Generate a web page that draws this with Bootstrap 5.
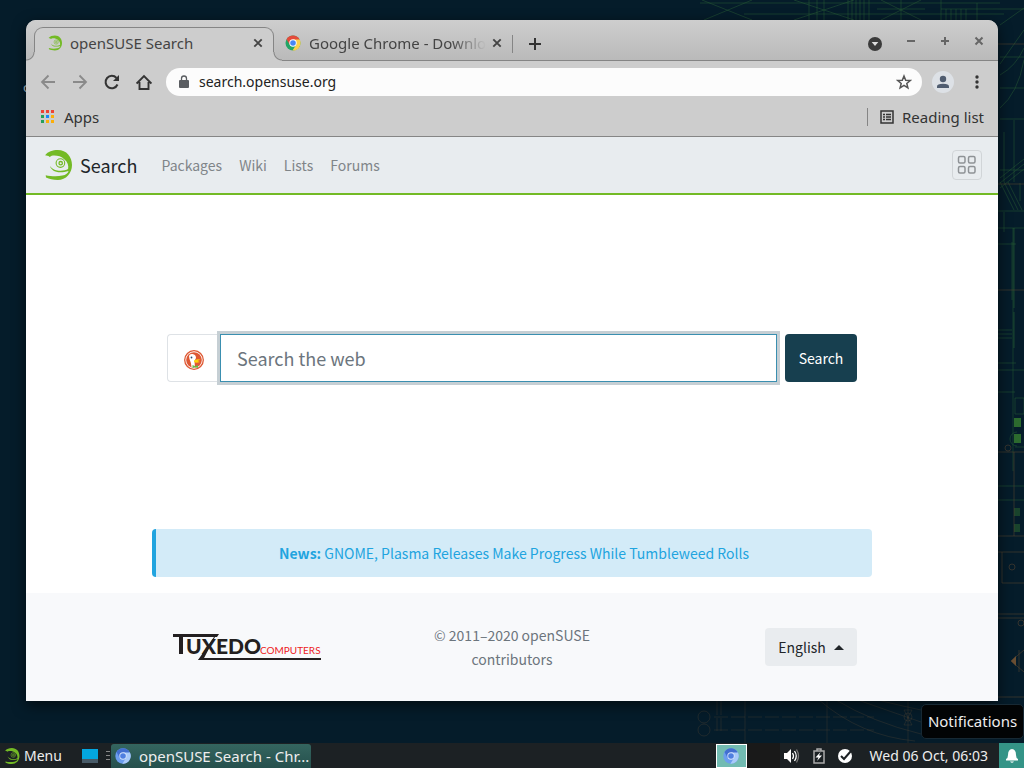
<!DOCTYPE html>
<html lang="en">
<head>
<meta charset="utf-8">
<meta name="viewport" content="width=device-width, initial-scale=1">
<title>openSUSE Search</title>
<link href="https://cdn.jsdelivr.net/npm/bootstrap@5.3.0/dist/css/bootstrap.min.css" rel="stylesheet">
<style>
:root{--ui:"Noto Sans",sans-serif;--site:"Noto Sans CJK SC",sans-serif;--green:#73ba25}
body{font:15px/20px var(--ui);background:#051c2a;color:#333}
button{font:inherit}
.bare{border:0;background:none;padding:0;color:inherit;display:inline-flex;align-items:center;justify-content:center}
svg{display:block;flex:none}
.desktop{padding:20px 26px 42px;min-height:0}
.wallpaper{z-index:0}
.browser{z-index:1;border-radius:10px 10px 0 0;box-shadow:0 4px 14px rgba(0,0,0,.6);background:#cdcdcd}
.tabstrip{height:41px;padding:7px 8px 0;background:linear-gradient(#cecece,#b9b9b9);box-shadow:inset 0 -1px #858585;border-radius:10px 10px 0 0;color:#444}
.tab-active{width:240px;padding:0 10px 3px 13px;background:#cdcdcd;border:1px solid #858585;border-bottom:0;border-radius:9px 9px 0 0}
.tab-active::before,.tab-active::after{content:"";position:absolute;bottom:0;width:9px;height:9px}
.tab-active::before{left:-9px;background:radial-gradient(circle at 0 0,transparent 7px,#858585 8px,#cdcdcd 9px)}
.tab-active::after{right:-9px;background:radial-gradient(circle at 100% 0,transparent 7px,#858585 8px,#cdcdcd 9px)}
.tab-idle{width:238px;padding:0 10px 2px 11px}
.fade-title{-webkit-mask-image:linear-gradient(90deg,#000 80%,transparent);mask-image:linear-gradient(90deg,#000 80%,transparent)}
.rule{width:1px;height:18px;background:#858585}
.controls{padding-right:6px}
.tools{height:42px;padding:0 14px;color:#333}
.address{height:28px;margin:0 10px 0 14px;background:#fcfcfc;border-radius:14px;padding:0 10px 0 11px}
.address input{border:0;background:none;outline:0;padding:0 0 1px;color:#222;font-size:14px}
.marks{height:34px;padding:0 14px 5px;border-bottom:1px solid #858585}
.marks a{color:#333;text-decoration:none}
.page{font:14px/24px var(--site);background:#fff;color:#212529;min-height:0}
.sitebar{height:58px;padding:0 16px 0 18px;background:#e8ecef;border-bottom:2px solid var(--green)}
.sitebar a{text-decoration:none;color:#808589}
.sitebar .brand{font-size:18px;line-height:22px;color:#212529}
.sitelinks{gap:17px}
.gridbtn{width:30px;height:30px;border:1px solid #d1d5d8;border-radius:4px;color:#8e9296}
.narrow{width:100%;max-width:720px}
.finder{padding:0 15px 8px}
.engine{width:53px;border:1px solid #dee2e6;border-right:0;border-radius:4px 0 0 4px;background:#fff}
.query{height:48px;border:1px solid #3a8fb0;border-radius:0;padding:0 16px;font-size:18px;color:#212529;outline:0;box-shadow:0 0 0 3px #c6cfd4!important}
.query::placeholder{color:#6c757d}
.go{width:72px;height:48px;background:#173f4f;color:#fff;border-radius:4px}
.news{height:48px;border-left:4px solid #21a4df;border-radius:4px;background:#d3ebf8;color:#21a4df}
.news a{color:inherit;text-decoration:none}
.foot{background:#f8f9fb;color:#6c757d;padding:30px 0}
.foot .narrow{padding:0 15px}
.lang{width:92px;height:38px;background:#e9ecef;color:#212529;border-radius:4px}
.panel{height:25px;background:#1c2124;color:#eee;z-index:2;font-size:14px}
.task{width:200px;height:24px;background:linear-gradient(#34655f,#26504d);border-radius:3px 3px 0 0;color:#eee;font-size:15px}
.pager{width:31px;height:24px;background:#72bbb2;border:1px solid #fff}
.pager-idle{width:33px;height:25px;background:#191919}
.tray{gap:10px;padding:0 4px 0 3px}
.clock{margin:0 11px 0 13px}
.bell{width:25px;height:25px;background:#349487}
.tip{right:0;bottom:29px;width:103px;height:35px;padding-bottom:1px;background:#020405;border:1px solid #172934;border-radius:5px;color:#eee;font-size:15px}
</style>
</head>
<body class="d-flex flex-column vh-100 overflow-hidden position-relative">
<svg width="0" height="0" class="position-absolute" aria-hidden="true"><defs>
<symbol id="geeko" viewBox="-.7 0 28 30"><path fill="#73ba25" d="M.4 5.200C3.200 1.500 8 0 13 0c9 0 14.300 6.800 14.300 15S21.500 30 13 30C8.200 30 4.600 28.800 1.300 27.600L1 25.200c5 1.300 12 1.600 16.600.4 3.600-.9 5.900-2.600 6.200-4.700-6.200 2-12.400 1.600-15.300-.5-1.900-1.400-2.700-2.600-3.300-4.400 2 2.700 4.300 3.900 7.300 4.400 4.300.6 8.500 0 10.900-1.400.7-3.500-.4-7-3.600-9.600C16.200 6 11.100 5.200 7 5.800L5 7 3.800 5.900Z"/><g fill="none" stroke="#73ba25"><circle cx="15.700" cy="13.100" r="4.300" stroke-width="1.100"/><circle cx="16" cy="13.200" r="1.700" stroke-width="1.300"/></g></symbol>
<symbol id="chrome" viewBox="0 0 16 16"><circle cx="8" cy="8" r="7.500" fill="#22a565"/><path fill="#e44b3b" d="M1.500 4.200a7.500 7.500 0 0 1 13 0L13 6H8L4.700 9.600Z"/><path fill="#fbd04d" d="M8 4.600h6.700A7.500 7.500 0 0 1 7.500 15.500l3.800-6Z"/><circle cx="8" cy="8" r="3.700" fill="#fff"/><circle cx="8" cy="8" r="2.800" fill="#4686f5"/></symbol>
<symbol id="chromium" viewBox="0 0 16 16"><circle cx="8" cy="8" r="7.700" fill="#6b9dee"/><path fill="#426ed0" d="M1.500 3.900a7.700 7.700 0 0 1 13 0L14 5H8L4.700 10Z"/><path fill="#a9cafa" d="M8 4.600h6.900A7.700 7.700 0 0 1 7.400 15.700l3.900-6.200Z"/><circle cx="8" cy="8" r="3.700" fill="#d5e3fc"/><circle cx="8" cy="8" r="2.800" fill="#4f7fe0"/></symbol>
<symbol id="cross" viewBox="0 0 10 10"><path d="m1.300 1.300 7.400 7.400m0-7.400L1.300 8.700" stroke="currentColor" stroke-width="1.900" fill="none"/></symbol>
</defs></svg>

<svg class="wallpaper position-absolute top-0 start-0 w-100 h-100" aria-hidden="true">
<text x="23" y="92" font-size="13" fill="#b9cbd5">o</text>
<svg x="100%" overflow="visible"><g fill="none" stroke="#275c36" stroke-opacity=".5">
<path d="M-324 3h300M-280 14h260M-322 0l50 20m0-20-48 20M-230 0l60 20m0-20-60 20M-215 0v20M-207 0v20M-200 0v20M-176 0v20M-172 0v20M-168 0v20M-164 0v20M-160 0v20M-155 0v20M-123 0v20M-147 9h48M-143 0l40 20m0-20-40 20M-83 9H0M-83 0v20M-78 9v11M-73 9v11M-68 9v11M-63 9v11M-58 9v11M-47 3v17"/>
<path d="M-24 75Q-8 66 0 48M-24 108Q-6 93 0 60M-24 178 0 159M-24 183 0 164M-24 188 0 169"/>
<path d="M-24 25 0 8M-24 64 0 30M-24 57h24M-24 88h24M-24 119h24M-20 132v50M-10 120v62M-24 170h24M-4 183v18"/>
<path d="m-24 182 14 28m-10-28 14 28m-10-28 14 28M-26 211H0M-26 228H0M-11 228v243M-20 212v20M-12 242v58M-26 244h18M-26 330h14m-14 4h14m-14 4h14M-26 363h18M-26 370H0M-26 392h17M-9 398H0v16H-9zM-9 447H0M-26 486H0M-26 500H0M-7 432a7 7 0 1 0 0 14"/>
</g><path d="M-10 312v36M-10 228v80" stroke="#39833a" stroke-width="2" stroke-opacity=".2"/>
<g fill="#3d8b31" opacity=".7"><path d="M-10 418h7v9h-7zM-10 434h7v9h-7z"/><path d="M-10 508h6v8h-6zM-10 524h6v8h-6z" opacity=".5"/></g>
<g fill="none" stroke="#594631" stroke-opacity=".55"><path d="M-26 44H0M-26 184H0M-26 290H0M-26 452H0M-26 536H0M-10 452v84M-26 614H0M-26 618H0M-26 552H0M-22 552v31h22M-26 697H0" /><circle cx="-16" cy="448" r="3"/><circle cx="-12" cy="567" r="3"/><circle cx="-3" cy="623" r="3"/><path d="M0 650-13 661 0 672M-5 650v22"/></g>
<path d="m-13 661 5-5v10z" fill="#6a4e32"/>
<g fill="none" stroke="#584a35" stroke-opacity=".3"><circle cx="-320" cy="717" r="6"/><circle cx="-320" cy="730" r="6"/><path d="M-307 701v30M-303 701v30M-310 717h160M-310 730h160" stroke-dasharray="14 3"/><path d="M-279 701v42M-197 701v42M-116 701v42M-205 700q42 36 96 41M-188 700q36 22 85 34M-166 700q34 12 63 22M-146 700q24 6 43 10"/><circle cx="-116" cy="717" r="4"/><path d="M-120 725h8l-8-15h8z"/></g></svg>
</svg>

<main class="desktop flex-fill d-flex position-relative">
<section class="browser flex-fill d-flex flex-column position-relative">
<div class="tabstrip d-flex align-items-stretch">
 <div class="tab-active position-relative d-flex align-items-center"><svg width="14" height="16"><use href="#geeko"/></svg><span class="flex-fill ps-2">openSUSE Search</span><button class="bare" aria-label="Close tab"><svg width="10" height="10"><use href="#cross"/></svg></button></div>
 <div class="tab-idle d-flex align-items-center"><svg width="16" height="16"><use href="#chrome"/></svg><span class="fade-title ms-2 text-nowrap">Google Chrome - Downlo</span><button class="bare ms-auto" aria-label="Close tab"><svg width="10" height="10"><use href="#cross"/></svg></button></div>
 <div class="d-flex align-items-center flex-fill"><i class="rule"></i><button class="bare ms-3" aria-label="New tab"><svg width="12" height="12" stroke="#333" stroke-width="2"><path d="M6 0v12M0 6h12"/></svg></button></div>
 <div class="controls d-flex align-items-center gap-4">
 <button class="bare" aria-label="Tab search"><svg width="16" height="16"><circle cx="9" cy="8" r="7" fill="#3b3b3b"/><path d="M5.700 6h6.600L9 10z" fill="#ddd"/></svg></button>
 <button class="bare pb-2" aria-label="Minimize"><svg width="10" height="12" stroke="#666" stroke-width="2"><path d="M1 7h8"/></svg></button>
 <button class="bare pb-2" aria-label="Maximize"><svg width="10" height="12" stroke="#666" stroke-width="2"><path d="M1 7h8M5 3v8"/></svg></button>
 <button class="bare pb-2" aria-label="Close"><svg width="10" height="12" stroke="#666" stroke-width="2"><path d="m1.500 3.500 7 7m0-7-7 7"/></svg></button></div>
</div>
<div class="tools d-flex align-items-center">
 <button class="bare me-3" aria-label="Back"><svg width="16" height="16" fill="none" stroke="#8a8a8a" stroke-width="1.800"><path d="M15 8H2M8.500 1.500 2 8l6.500 6.500"/></svg></button>
 <button class="bare me-3" aria-label="Forward"><svg width="16" height="16" fill="none" stroke="#8a8a8a" stroke-width="1.800"><path d="M1 8h13M7.500 1.500 14 8l-6.500 6.500"/></svg></button>
 <button class="bare me-3" aria-label="Reload"><svg width="16" height="16" fill="none" stroke="#333" stroke-width="2"><path d="M13.500 10.500A6.200 6.200 0 1 1 12.500 4"/><path d="M15 1v6H9z" fill="#333" stroke="none"/></svg></button>
 <button class="bare" aria-label="Home"><svg width="16" height="16" fill="none" stroke="#333" stroke-width="1.900"><path d="M.6 9.500 8 2l7.400 7.500M3.500 8v7h9V8"/></svg></button>
 <div class="address d-flex flex-fill align-items-center"><svg width="14" height="16" fill="#5a5d61"><path d="M3 6h8q1 0 1 1v6q0 1-1 1H3q-1 0-1-1V7q0-1 1-1z"/><path d="M4.500 7V4.500a2.500 2.500 0 0 1 5 0V7" fill="none" stroke="#5a5d61" stroke-width="1.300"/></svg><input class="flex-fill ms-2" aria-label="Address" value="search.opensuse.org"><button class="bare" aria-label="Bookmark"><svg width="16" height="16" fill="none" stroke="#555" stroke-width="1.500"><path d="m8 2 1.700 4.200 4.500.3-3.400 2.900 1.100 4.400L8 11.400l-3.900 2.400 1.100-4.400L1.800 6.500l4.500-.3z"/></svg></button></div>
 <button class="bare me-3" aria-label="Profile"><svg width="22" height="22"><circle cx="11" cy="11" r="11" fill="#dde1e6"/><circle cx="11" cy="8" r="3.200" fill="#505d70"/><path d="M5 17v-1.500q0-2.800 6-2.800t6 2.800V17z" fill="#505d70"/></svg></button>
 <button class="bare" aria-label="Menu"><svg width="14" height="16" fill="#333"><circle cx="7" cy="3" r="1.700"/><circle cx="7" cy="8" r="1.700"/><circle cx="7" cy="13" r="1.700"/></svg></button>
</div>
<nav class="marks d-flex align-items-center" aria-label="Bookmarks">
 <a href="#" class="d-flex align-items-center gap-2"><svg width="16" height="14"><path d="M1 0h3v3H1zM6 0h3v3H6zM11 0h3v3h-3z" fill="#ee4234"/><path d="M1 5h3v3H1zM1 10h3v3H1z" fill="#24a05a"/><path d="M6 5h3v3H6z" fill="#1689fa"/><path d="M11 5h3v3h-3zM6 10h3v3H6zM11 10h3v3h-3z" fill="#fbae08"/></svg>Apps</a>
 <i class="rule ms-auto me-2"></i><a href="#" class="d-flex align-items-center gap-2"><svg class="ms-1" width="14" height="14" fill="none" stroke="#333"><path d="M1 1h12v12H1z" stroke-width="1.500"/><path d="M3 4.500h2m1 0h5M3 7h2m1 0h5M3 9.500h2m1 0h5" stroke-width="1.300"/></svg>Reading list</a>
</nav>
<div class="page flex-fill d-flex flex-column align-items-center">
 <header class="sitebar w-100 d-flex align-items-center">
 <a href="#" class="brand d-flex align-items-center gap-2 me-4"><svg width="28" height="30"><use href="#geeko"/></svg>Search</a>
 <nav class="sitelinks d-flex"><a href="#">Packages</a><a href="#">Wiki</a><a href="#">Lists</a><a href="#">Forums</a></nav>
 <button class="bare gridbtn ms-auto" aria-label="Applications"><svg width="20" height="20" fill="none" stroke="currentColor" stroke-width="1.500"><rect x="1.500" y="1.500" width="6.500" height="6.500" rx="1.500"/><rect x="11.500" y="1.500" width="6.500" height="6.500" rx="1.500"/><rect x="1.500" y="11.500" width="6.500" height="6.500" rx="1.500"/><rect x="11.500" y="11.500" width="6.500" height="6.500" rx="1.500"/></svg></button>
 </header>
 <form class="narrow finder flex-fill d-flex align-items-center" onsubmit="return false">
 <div class="d-flex flex-fill me-2"><button type="button" class="bare engine" aria-label="DuckDuckGo"><svg class="mt-1" width="20" height="20"><circle cx="10" cy="10" r="9.300" fill="#fff" stroke="#de5833" stroke-width="1.300"/><circle cx="10" cy="10" r="7.800" fill="#de5833"/><path d="M5 6q.5-2.500 3.500-2 3.500.5 3.500 4l-1.500 3 .5 6.700q-2.500.3-3.500-.7Q7 12 5.500 9z" fill="#fff"/><circle cx="7.500" cy="7.500" r=".9" fill="#274f72"/><path d="M10 10.500q4-2 6.500-.7L13.500 11l2.500 1q-4 1.500-6 0z" fill="#fdd20a"/><path d="m8.500 15 3 1.200 2.500-1.200v3l-2.500-.8-3 .8z" fill="#65bc46"/></svg></button><input class="query flex-fill" type="text" placeholder="Search the web" aria-label="Search the web"></div>
 <button class="bare go">Search</button>
 </form>
 <div class="narrow news d-flex align-items-center justify-content-center mb-3"><a href="#"><b>News:</b> GNOME, Plasma Releases Make Progress While Tumbleweed Rolls</a></div>
 <footer class="foot w-100"><div class="narrow mx-auto row g-0 align-items-center">
 <div class="col-4"><svg class="ms-1" width="160" height="30" role="img" aria-label="Tuxedo Computers"><g fill="#231f20" font-family="Lato,sans-serif" font-weight="900" font-size="21"><path d="M2 2h46l-2 3H2zM6 2h6v20H8V5zM34 24 30 26h120v2H27z"/><path d="M48 2 44 5 32 28h-5L43 5z"/><text x="15" y="22">UXEDO</text></g><text x="89" y="22" fill="#ed1c24" font-family="Lato,sans-serif" font-size="10">COMPUTERS</text></svg></div>
 <div class="col-4 text-center px-4">© 2011–2020 openSUSE contributors</div>
 <div class="col-4 d-flex justify-content-end"><button class="bare lang gap-2">English <svg width="10" height="5"><path d="M0 5 5 0l5 5z" fill="#212529"/></svg></button></div>
 </div></footer>
</div>
</section>
</main>

<footer class="panel d-flex align-items-center position-relative">
 <button class="bare gap-1 ps-1"><svg width="16" height="16"><use href="#geeko"/></svg><span>Menu</span></button>
 <button class="bare ms-3 ps-1" aria-label="Show desktop"><svg width="16" height="16"><path d="M0 1h16v10H0z" fill="#03a6df"/><path d="M0 11h16v4H0z" fill="#485b68"/></svg></button>
 <svg class="ms-2" width="5" height="12" stroke="#888"><path d="M0 1.500h4M0 5.500h4M0 9.500h4"/></svg>
 <button class="bare task justify-content-start ps-1 gap-2"><svg width="16" height="16"><use href="#chromium"/></svg><span class="text-nowrap">openSUSE Search - Chr...</span></button>
 <button class="bare pager ms-auto" aria-label="Workspace 1"><svg width="16" height="16"><use href="#chromium"/></svg></button><div class="pager-idle"></div>
 <div class="tray d-flex align-items-center">
 <svg width="18" height="16" fill="#fff"><path d="M1 5h3l4-4v14l-4-4H1z"/><path d="M9.500 5q2 3 0 6M11.500 3q3.500 5 0 10" fill="none" stroke="#fff" stroke-width="1.300"/><path d="M13.500 1.500q4 6.500 0 13" fill="none" stroke="#777" stroke-width="1.300"/></svg>
 <svg width="16" height="16"><path d="M3 3h10v12H3zM6 1h4v2H6z" fill="none" stroke="#aaa" stroke-width="1.500"/><path d="m9.500 4-5 5.500h3L6 13l5-5.500H8z" fill="#fff"/></svg>
 <svg width="16" height="16"><circle cx="8" cy="8" r="7" fill="#fff"/><path d="m4 8 3 3 7-8" fill="none" stroke="#1c2124" stroke-width="2"/></svg>
 </div>
 <time class="clock">Wed 06 Oct, 06:03</time>
 <button class="bare bell" aria-label="Notifications"><svg width="16" height="16" fill="#fff"><path d="M8 1q4 .5 4 6 0 3 2 4v1.500H2V11q2-1 2-4 0-5.500 4-6zM6 13.500h4q-2 2.500-4 0z"/></svg></button>
 <div class="tip position-absolute d-flex align-items-center justify-content-center" role="tooltip">Notifications</div>
</footer>
<script src="https://cdn.jsdelivr.net/npm/bootstrap@5.3.0/dist/js/bootstrap.bundle.min.js"></script>
</body>
</html>
